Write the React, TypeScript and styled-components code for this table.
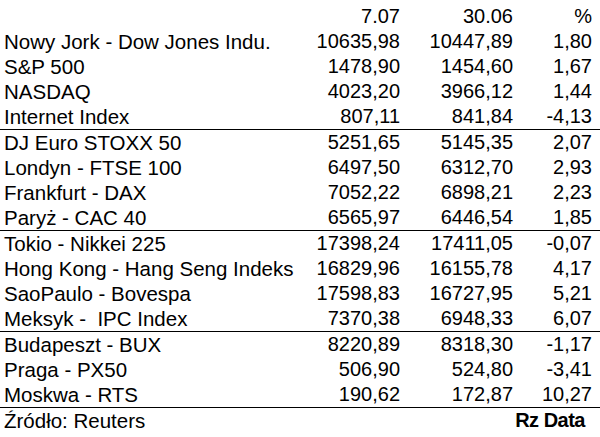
import React from 'react';
import styled, {createGlobalStyle} from 'styled-components';

type Quote = {name: string; now: string; before: string; change: string};

const groups: Quote[][] = [
  [
    {name: 'Nowy Jork - Dow Jones Indu.', now: '10635,98', before: '10447,89', change: '1,80'},
    {name: 'S&P 500', now: '1478,90', before: '1454,60', change: '1,67'},
    {name: 'NASDAQ', now: '4023,20', before: '3966,12', change: '1,44'},
    {name: 'Internet Index', now: '807,11', before: '841,84', change: '-4,13'},
  ],
  [
    {name: 'DJ Euro STOXX 50', now: '5251,65', before: '5145,35', change: '2,07'},
    {name: 'Londyn - FTSE 100', now: '6497,50', before: '6312,70', change: '2,93'},
    {name: 'Frankfurt - DAX', now: '7052,22', before: '6898,21', change: '2,23'},
    {name: 'Paryż - CAC 40', now: '6565,97', before: '6446,54', change: '1,85'},
  ],
  [
    {name: 'Tokio - Nikkei 225', now: '17398,24', before: '17411,05', change: '-0,07'},
    {name: 'Hong Kong - Hang Seng Indeks', now: '16829,96', before: '16155,78', change: '4,17'},
    {name: 'SaoPaulo - Bovespa', now: '17598,83', before: '16727,95', change: '5,21'},
    {name: 'Meksyk -  IPC Index', now: '7370,38', before: '6948,33', change: '6,07'},
  ],
  [
    {name: 'Budapeszt - BUX', now: '8220,89', before: '8318,30', change: '-1,17'},
    {name: 'Praga - PX50', now: '506,90', before: '524,80', change: '-3,41'},
    {name: 'Moskwa - RTS', now: '190,62', before: '172,87', change: '10,27'},
  ],
];

const GlobalStyle = createGlobalStyle`
  html, body {
    margin: 0;
    padding: 0;
    background: #fff;
  }
`;

const Page = styled.div`
  width: 600px;
  height: 437px;
  padding-top: 4px;
  box-sizing: border-box;
  overflow: hidden;
  background: #fff;
  color: #000;
  font-family: 'Liberation Sans', Arial, sans-serif;
  font-size: 20px;
`;

const Row = styled.div`
  display: grid;
  grid-template-columns: 1fr 100px 113px 79px;
  padding: 0 8px 0 4px;
  height: 25px;
  line-height: 25px;
  white-space: pre;
`;

const Group = styled.div`
  border-top: 1px solid #000;
`;

const Name = styled.span`
  font-size: 20.5px;
`;

const Num = styled.span`
  text-align: right;
`;

const Footer = styled(Row)`
  border-top: 1px solid #000;
  grid-template-columns: 1fr auto;
  padding-right: 15px;
`;

const Brand = styled.span`
  font-weight: bold;
  letter-spacing: -0.5px;
`;

const App: React.FC = () => (
  <Page>
    <GlobalStyle />
    <Row>
      <span />
      <Num>7.07</Num>
      <Num>30.06</Num>
      <Num>%</Num>
    </Row>
    {groups.map((group, i) => {
      const rows = group.map((q) => (
        <Row key={q.name}>
          <Name>{q.name}</Name>
          <Num>{q.now}</Num>
          <Num>{q.before}</Num>
          <Num>{q.change}</Num>
        </Row>
      ));
      return i === 0 ? <div key={i}>{rows}</div> : <Group key={i}>{rows}</Group>;
    })}
    <Footer>
      <Name>Źródło: Reuters</Name>
      <Brand>Rz Data</Brand>
    </Footer>
  </Page>
);

export default App;
